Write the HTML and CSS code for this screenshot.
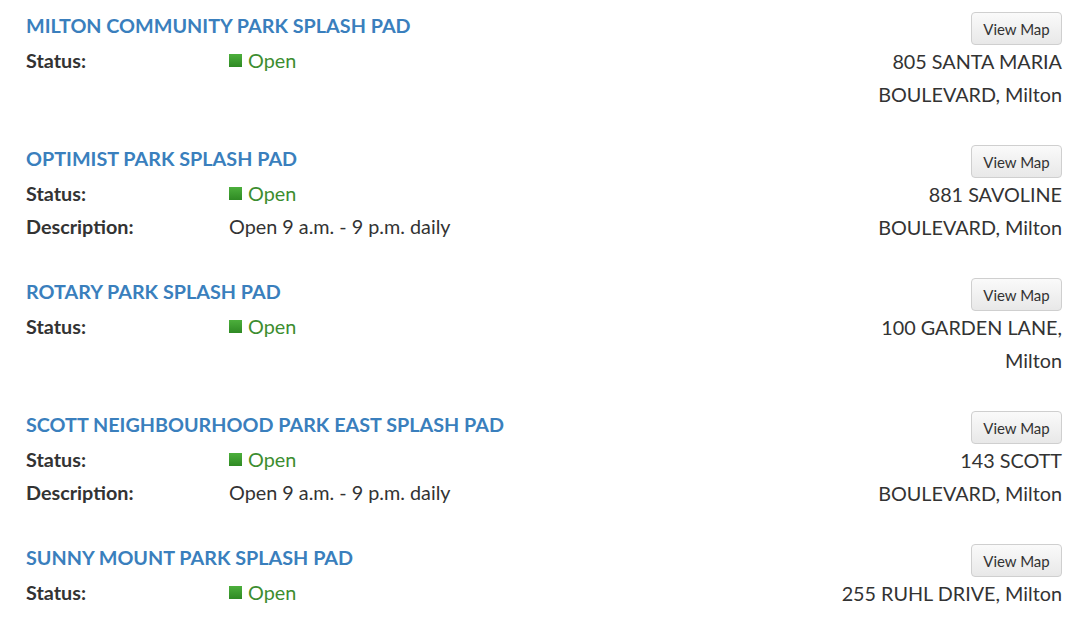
FILE: index.html
```html
<!DOCTYPE html>
<html lang="en">
<head>
    <meta charset="UTF-8">
    <title>Splash Pads</title>
    <link rel="stylesheet" href="styles.css">
</head>
<body>
    <div class="facility-list">
        <div class="facility">
            <div class="facility-info">
                <h3 class="facility-name">MILTON COMMUNITY PARK SPLASH PAD</h3>
                <div class="facility-row"><span class="label">Status:</span><span class="status-open"><i class="dot"></i>Open</span></div>
            </div>
            <div class="facility-side">
                <button class="map-button">View Map</button>
                <div class="address">805 SANTA MARIA<br>BOULEVARD, Milton</div>
            </div>
        </div>

        <div class="facility">
            <div class="facility-info">
                <h3 class="facility-name">OPTIMIST PARK SPLASH PAD</h3>
                <div class="facility-row"><span class="label">Status:</span><span class="status-open"><i class="dot"></i>Open</span></div>
                <div class="facility-row"><span class="label">Description:</span><span>Open 9 a.m. - 9 p.m. daily</span></div>
            </div>
            <div class="facility-side">
                <button class="map-button">View Map</button>
                <div class="address">881 SAVOLINE<br>BOULEVARD, Milton</div>
            </div>
        </div>

        <div class="facility">
            <div class="facility-info">
                <h3 class="facility-name">ROTARY PARK SPLASH PAD</h3>
                <div class="facility-row"><span class="label">Status:</span><span class="status-open"><i class="dot"></i>Open</span></div>
            </div>
            <div class="facility-side">
                <button class="map-button">View Map</button>
                <div class="address">100 GARDEN LANE,<br>Milton</div>
            </div>
        </div>

        <div class="facility">
            <div class="facility-info">
                <h3 class="facility-name">SCOTT NEIGHBOURHOOD PARK EAST SPLASH PAD</h3>
                <div class="facility-row"><span class="label">Status:</span><span class="status-open"><i class="dot"></i>Open</span></div>
                <div class="facility-row"><span class="label">Description:</span><span>Open 9 a.m. - 9 p.m. daily</span></div>
            </div>
            <div class="facility-side">
                <button class="map-button">View Map</button>
                <div class="address">143 SCOTT<br>BOULEVARD, Milton</div>
            </div>
        </div>

        <div class="facility">
            <div class="facility-info">
                <h3 class="facility-name">SUNNY MOUNT PARK SPLASH PAD</h3>
                <div class="facility-row"><span class="label">Status:</span><span class="status-open"><i class="dot"></i>Open</span></div>
            </div>
            <div class="facility-side">
                <button class="map-button">View Map</button>
                <div class="address">255 RUHL DRIVE, Milton</div>
            </div>
        </div>
    </div>
</body>
</html>
```

FILE: styles.css
```css
body {
    margin: 0;
    font-family: Lato, "Noto Sans", sans-serif;
    font-size: 19.8px;
    color: #333;
    background: #fff;
}
.facility-list {
    padding: 12px 18px 0 26px;
}
.facility {
    display: flex;
    justify-content: space-between;
    padding-bottom: 34px;
}
.facility-info {
    flex: 1;
}
.facility-name {
    margin: 0 0 4px;
    font-size: 19.75px;
    line-height: 28px;
    font-weight: 700;
    color: #3a7fbd;
}
.facility-row {
    display: flex;
    line-height: 33px;
}
.label {
    width: 203px;
    font-weight: 700;
}
.status-open {
    color: #3c8d2f;
    display: flex;
    align-items: center;
}
.dot {
    width: 13px;
    height: 13px;
    margin-right: 6px;
    background: linear-gradient(#4caf3c, #2f8a24);
}
.facility-side {
    width: 240px;
    display: flex;
    flex-direction: column;
    align-items: flex-end;
}
.map-button {
    width: 91px;
    height: 33px;
    font-family: inherit;
    font-size: 15px;
    color: #333;
    background: linear-gradient(#fafafa, #e8e8e8);
    border: 1px solid #cfcfcf;
    border-radius: 4px;
    cursor: pointer;
}
.address {
    text-align: right;
    line-height: 33px;
}
```
